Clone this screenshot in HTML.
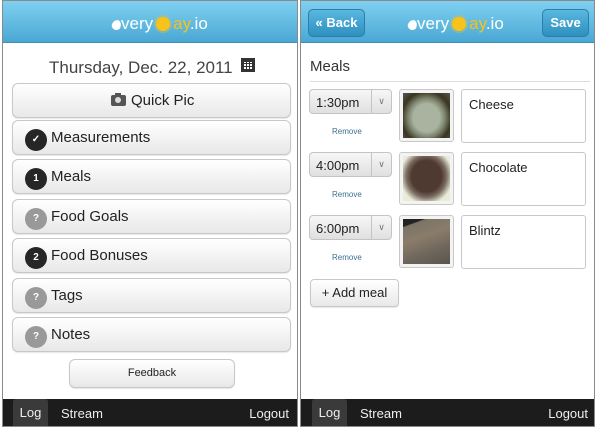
<!DOCTYPE html>
<html><head><meta charset="utf-8"><style>
*{margin:0;padding:0;box-sizing:border-box}
body{width:595px;height:427px;background:#fff;font-family:"Liberation Sans",sans-serif;position:relative;overflow:hidden;color:#222}
.a{position:absolute}
.panel{position:absolute;top:0;height:427px;border:1px solid #8a8a8a;background:#fff;overflow:hidden}
.hdr{position:absolute;left:0;right:0;top:0;height:42px;background:linear-gradient(#7fd0f0,#4aa8d4);border-bottom:1px solid #3d8fb8}
.bar{position:absolute;left:0;right:0;bottom:0;height:27px;background:#1c1c1c;color:#eee;font-size:13px}
.btn{position:absolute;border:1px solid #c8c8c8;border-radius:6px;background:linear-gradient(#fff,#e8e8e8);box-shadow:0 1px 1px rgba(0,0,0,.1)}
.row{left:9px;width:279px;height:35px;font-size:15px}
.row span.t{position:absolute;left:38px;top:8px}
.ic{position:absolute;left:12px;top:8px;width:22px;height:22px;border-radius:50%;background:#262626;color:#fff;font-size:10px;font-weight:bold;text-align:center;line-height:22px}
.ic.q{background:#999}
.logo{position:absolute;top:13px;font-size:17px;color:#fff;white-space:nowrap}
.hb{position:absolute;top:8px;height:28px;border-radius:5px;background:linear-gradient(#58b8e0,#2f8fbf);border:1px solid #2a7fab;color:#fff;font-weight:bold;font-size:13px;text-align:center;line-height:26px}
.sel{position:absolute;left:8px;width:83px;height:25px;border:1px solid #c4c4c4;border-radius:4px;background:linear-gradient(#f7f7f7,#e0e0e0);font-size:13px}
.sel span{position:absolute;left:6px;top:5px}
.sel i{position:absolute;right:0;top:0;width:20px;height:23px;border-left:1px solid #c4c4c4;font-style:normal;font-size:9px;color:#777;text-align:center;line-height:23px}
.rm{position:absolute;left:31px;font-size:8px;color:#3a7290}
.ph{position:absolute;left:98px;width:55px;height:53px;border:1px solid #c8c8c8;border-radius:3px;padding:3px;background:#f3f3f3}
.ph div{width:100%;height:100%}
.ta{position:absolute;left:160px;width:125px;height:54px;border:1px solid #c8c8c8;border-radius:3px;font-size:13px;padding:7px 7px}
</style></head><body>
<!-- LEFT -->
<div class="panel" style="left:2px;width:296px">
 <div class="hdr">
  <div class="logo" style="left:109px"><span style="display:inline-block;width:9px;height:10px;background:#fff;border-radius:50% 50% 50% 50%/60% 60% 40% 40%;transform:rotate(20deg);vertical-align:-1px"></span>very<span style="display:inline-block;width:14px;height:14px;border-radius:50%;background:#f7c21a;margin:0 3px;vertical-align:-2px;box-shadow:0 0 0 2px rgba(247,194,26,.3)"></span><span style="color:#f7c21a">ay</span>.io</div>
 </div>
 <div class="a" style="left:46px;top:57px;font-size:17px;color:#444">Thursday, Dec. 22, 2011</div>
 <div class="a" style="left:238px;top:57px;width:14px;height:14px;border:2px solid #333;border-top-width:4px;background:repeating-linear-gradient(90deg,#333 0 1px,transparent 1px 3px),repeating-linear-gradient(0deg,#333 0 1px,#fff 1px 3px)"></div>
 <div class="btn row" style="top:82px"><span class="a" style="left:98px;top:11px;width:15px;height:11px;background:#555;border-radius:2px"><span class="a" style="left:4px;top:2px;width:6px;height:6px;border-radius:50%;background:#ddd"></span><span class="a" style="left:4px;top:-2px;width:6px;height:2px;background:#555"></span></span><span class="a" style="left:118px;top:8px;font-size:15px">Quick Pic</span></div>
 <div class="btn row" style="top:119px"><span class="ic">✓</span><span class="t">Measurements</span></div>
 <div class="btn row" style="top:158px"><span class="ic">1</span><span class="t">Meals</span></div>
 <div class="btn row" style="top:198px"><span class="ic q">?</span><span class="t">Food Goals</span></div>
 <div class="btn row" style="top:237px"><span class="ic">2</span><span class="t">Food Bonuses</span></div>
 <div class="btn row" style="top:277px"><span class="ic q">?</span><span class="t">Tags</span></div>
 <div class="btn row" style="top:316px"><span class="ic q">?</span><span class="t">Notes</span></div>
 <div class="btn" style="left:66px;top:358px;width:166px;height:29px;font-size:11px;text-align:center;line-height:27px">Feedback</div>
 <div class="bar"><span class="a" style="left:10px;top:0;width:35px;height:27px;background:#3a3a3a;border-radius:3px 3px 0 0;text-align:center;line-height:28px">Log</span><span class="a" style="left:58px;top:7px">Stream</span><span class="a" style="right:8px;top:7px">Logout</span></div>
</div>
<!-- RIGHT -->
<div class="panel" style="left:300px;width:295px">
 <div class="hdr">
  <div class="hb" style="left:7px;width:57px">« Back</div>
  <div class="logo" style="left:107px"><span style="display:inline-block;width:9px;height:10px;background:#fff;border-radius:50% 50% 50% 50%/60% 60% 40% 40%;transform:rotate(20deg);vertical-align:-1px"></span>very<span style="display:inline-block;width:14px;height:14px;border-radius:50%;background:#f7c21a;margin:0 3px;vertical-align:-2px;box-shadow:0 0 0 2px rgba(247,194,26,.3)"></span><span style="color:#f7c21a">ay</span>.io</div>
  <div class="hb" style="left:241px;width:47px">Save</div>
 </div>
 <div class="a" style="left:9px;top:57px;font-size:15px;color:#333">Meals</div>
 <div class="a" style="left:9px;top:80px;width:280px;height:1px;background:#ddd"></div>

 <div class="sel" style="top:88px"><span>1:30pm</span><i>∨</i></div>
 <div class="rm" style="top:126px">Remove</div>
 <div class="ph" style="top:88px"><div style="background:radial-gradient(ellipse at 50% 55%,#aab3a0 0 40%,#7d8670 55%,#3a3420 75%,#555 100%)"></div></div>
 <div class="ta" style="top:88px">Cheese</div>

 <div class="sel" style="top:151px"><span>4:00pm</span><i>∨</i></div>
 <div class="rm" style="top:189px">Remove</div>
 <div class="ph" style="top:151px"><div style="background:radial-gradient(ellipse at 50% 45%,#4e3a30 0 45%,#7a6a60 60%,#e8ecd8 80%)"></div></div>
 <div class="ta" style="top:151px">Chocolate</div>

 <div class="sel" style="top:214px"><span>6:00pm</span><i>∨</i></div>
 <div class="rm" style="top:252px">Remove</div>
 <div class="ph" style="top:214px"><div style="background:linear-gradient(160deg,#222 0 12%,#7a7466 14%,#8a7c6a 40%,#6e665c 70%,#5a554c)"></div></div>
 <div class="ta" style="top:214px">Blintz</div>

 <div class="btn" style="left:9px;top:278px;width:89px;height:28px;font-size:13px;text-align:center;line-height:26px;border-radius:4px">+ Add meal</div>

 <div class="bar"><span class="a" style="left:11px;top:0;width:35px;height:27px;background:#3a3a3a;border-radius:3px 3px 0 0;text-align:center;line-height:28px">Log</span><span class="a" style="left:59px;top:7px">Stream</span><span class="a" style="right:6px;top:7px">Logout</span></div>
</div>
</body></html>
